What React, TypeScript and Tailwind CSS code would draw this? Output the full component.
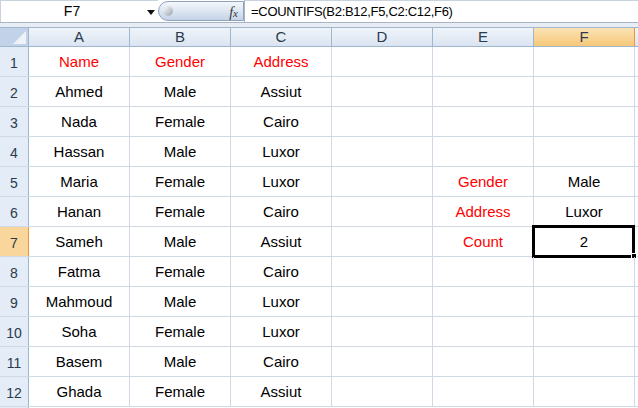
import React from "react";

const rows: [string, string, string, string, string][] = [
  ["Name", "Gender", "Address", "", ""],
  ["Ahmed", "Male", "Assiut", "", ""],
  ["Nada", "Female", "Cairo", "", ""],
  ["Hassan", "Male", "Luxor", "", ""],
  ["Maria", "Female", "Luxor", "Gender", "Male"],
  ["Hanan", "Female", "Cairo", "Address", "Luxor"],
  ["Sameh", "Male", "Assiut", "Count", "2"],
  ["Fatma", "Female", "Cairo", "", ""],
  ["Mahmoud", "Male", "Luxor", "", ""],
  ["Soha", "Female", "Luxor", "", ""],
  ["Basem", "Male", "Cairo", "", ""],
  ["Ghada", "Female", "Assiut", "", ""],
];

const cols = ["A", "B", "C", "D", "E", "F"];

function Cell({ text, red, children }: { text: string; red?: boolean; children?: React.ReactNode }) {
  return (
    <div
      className={`relative w-[101px] h-full shrink-0 border-r border-[#d0d7e5] flex items-center justify-center pt-[1px] text-[15px] ${
        red ? "text-[#ff0000]" : "text-black"
      }`}
    >
      {text}
      {children}
    </div>
  );
}

export default function App() {
  return (
    <div
      className="w-[638px] h-[408px] overflow-hidden bg-white relative"
      style={{ fontFamily: '"Liberation Sans", Arial, sans-serif' }}
    >
      {/* Formula bar */}
      <div className="h-[23px] flex bg-white border-b border-[#a7b4c6]">
        <div className="w-[158px] h-full flex items-center relative border-l border-t border-[#c9d3e0]">
          <div className="w-[142px] text-center text-[14px] text-black">F7</div>
          <svg width="8" height="5" className="absolute left-[146px] top-[9px]" viewBox="0 0 8 5">
            <path d="M0 0 H8 L4 5 Z" fill="#111" />
          </svg>
        </div>
        <div className="w-[86px] h-full flex items-center relative">
          <div className="h-[20px] w-[86px] rounded-l-[10px] border border-[#8fa3c0] bg-gradient-to-b from-[#f4f7fb] via-[#dde6f2] to-[#c5d3e7] flex items-center relative">
            <div className="absolute left-[4px] top-[4px] w-[10px] h-[10px] rounded-full bg-gradient-to-br from-[#ffffff] to-[#9aa4b1]"></div>
            <span
              className="absolute right-[5px] top-[0px] text-[14px] italic text-[#333]"
              style={{ fontFamily: '"Liberation Serif", "Times New Roman", serif' }}
            >
              <i>f</i>
              <span className="text-[11px]">x</span>
            </span>
          </div>
        </div>
        <div className="flex-1 h-full flex items-center pl-[6px] border-l border-[#a7b4c6] border-t border-t-[#c9d3e0] text-[13px] tracking-[-0.3px] text-black">
          =COUNTIFS(B2:B12,F5,C2:C12,F6)
        </div>
      </div>
      <div className="h-[5px] bg-[#e8edf5] border-b border-[#9eb6ce]"></div>

      {/* Column headers */}
      <div className="h-[19px] flex border-b border-[#9eb6ce]">
        <div className="w-[29px] h-full shrink-0 border-r border-[#9eb6ce] bg-[#c2d2e8] relative">
          <svg className="absolute right-[2px] bottom-[2px]" width="13" height="13" viewBox="0 0 13 13">
            <path d="M13 0 V13 H0 Z" fill="#eef3fa" />
          </svg>
        </div>
        {cols.map((c) =>
          c === "F" ? (
            <div
              key={c}
              className="w-[101px] h-full shrink-0 border-r border-[#f29436] bg-gradient-to-b from-[#fbe2b3] to-[#f6c878] flex items-center justify-center text-[15px] text-[#2b3b4c]"
            >
              {c}
            </div>
          ) : (
            <div
              key={c}
              className="w-[101px] h-full shrink-0 border-r border-[#9eb6ce] bg-gradient-to-b from-[#f0f4fa] to-[#dae4f1] flex items-center justify-center text-[15px] text-[#2b3b4c]"
            >
              {c}
            </div>
          )
        )}
        <div className="flex-1 h-full bg-gradient-to-b from-[#f0f4fa] to-[#dae4f1]"></div>
      </div>

      {/* Rows */}
      {rows.map((r, i) => {
        const n = i + 1;
        const sel = n === 7;
        return (
          <div key={n} className="h-[30px] flex border-b border-[#d0d7e5]">
            <div
              className={`w-[29px] h-full shrink-0 border-r flex items-end justify-center pb-[2px] text-[14px] text-[#2b3b4c] ${
                sel ? "bg-[#f9d69b] border-[#f29436]" : "bg-[#e4ecf7] border-[#9eb6ce]"
              }`}
            >
              {n}
            </div>
            <Cell text={r[0]} red={n === 1} />
            <Cell text={r[1]} red={n === 1} />
            <Cell text={r[2]} red={n === 1} />
            <Cell text="" />
            <Cell text={r[3]} red={r[3] !== ""} />
            <Cell text={r[4]}>
              {sel && (
                <>
                  <div className="absolute left-[-2px] top-[-2px] w-[103px] h-[33px] border-[3px] border-black"></div>
                  <div className="absolute left-[97px] top-[26px] w-[6px] h-[6px] bg-black border border-white"></div>
                </>
              )}
            </Cell>
            <div className="flex-1"></div>
          </div>
        );
      })}
      <div className="h-[30px] flex">
        <div className="w-[29px] h-full bg-[#e4ecf7] border-r border-[#9eb6ce]"></div>
      </div>
    </div>
  );
}
